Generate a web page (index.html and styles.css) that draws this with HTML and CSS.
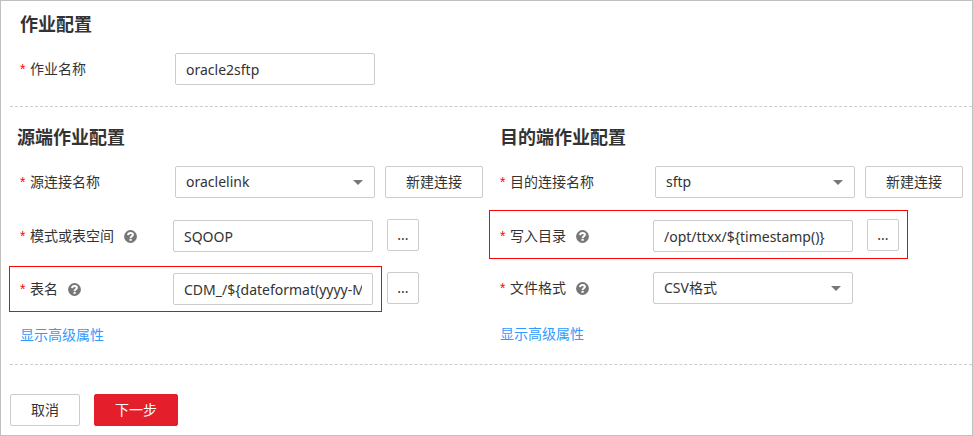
FILE: index.html
```html
<!DOCTYPE html>
<html lang="zh-CN">
<head>
<meta charset="utf-8">
<meta name="viewport" content="width=device-width, initial-scale=1">
<title>作业配置</title>
<link rel="stylesheet" href="styles.css">
</head>
<body>
<svg class="sprite" aria-hidden="true">
  <symbol id="help" viewBox="0 0 13 13">
    <circle cx="6.5" cy="6.5" r="6.4" fill="#777"/>
    <path d="M4 5.200C4.200 3.700 5.200 3 6.500 3c1.400 0 2.400.7 2.400 1.800C8.900 6.300 6.700 6.300 6.600 8" fill="none" stroke="#fff" stroke-width="2"/>
    <rect x="5.500" y="8.800" width="2.200" height="2" fill="#fff"/>
  </symbol>
</svg>
<form class="page">
  <section class="job">
    <h2 class="title">作业配置</h2>
    <div class="row">
      <label class="label" for="job-name"><span class="star">*</span>作业名称</label>
      <input class="control" id="job-name" type="text" value="oracle2sftp">
    </div>
  </section>
  <hr class="divider">
  <div class="columns">
    <section class="column">
      <h2 class="title title-source">源端作业配置</h2>
      <div class="rows">
        <div class="row">
          <label class="label" for="src-link"><span class="star">*</span>源连接名称</label>
          <span class="select"><select class="control" id="src-link"><option>oraclelink</option></select></span>
          <button class="button new" type="button">新建连接</button>
        </div>
        <div class="row row-help">
          <label class="label" for="schema"><span class="star">*</span>模式或表空间<svg class="help"><use href="#help"/></svg></label>
          <input class="control" id="schema" type="text" value="SQOOP">
          <button class="button more" type="button" aria-label="选择模式或表空间">...</button>
        </div>
        <div class="row row-help">
          <div class="row-help row marked">
            <label class="label" for="table"><span class="star">*</span>表名<svg class="help"><use href="#help"/></svg></label>
            <input class="control" id="table" type="text" value="CDM_/${dateformat(yyyy-MM-dd)}">
          </div>
          <button class="button more" type="button" aria-label="选择表">...</button>
        </div>
        <a class="link" href="#">显示高级属性</a>
      </div>
    </section>
    <section class="column">
      <h2 class="title">目的端作业配置</h2>
      <div class="rows">
        <div class="row">
          <label class="label" for="dst-link"><span class="star">*</span>目的连接名称</label>
          <span class="select"><select class="control" id="dst-link"><option>sftp</option></select></span>
          <button class="button new" type="button">新建连接</button>
        </div>
        <div class="row row-help marked">
          <label class="label" for="dir"><span class="star">*</span>写入目录<svg class="help"><use href="#help"/></svg></label>
          <input class="control" id="dir" type="text" value="/opt/ttxx/${timestamp()}">
          <button class="button more" type="button" aria-label="选择写入目录">...</button>
        </div>
        <div class="row row-help">
          <label class="label" for="format"><span class="star">*</span>文件格式<svg class="help"><use href="#help"/></svg></label>
          <span class="select"><select class="control" id="format"><option>CSV格式</option></select></span>
        </div>
        <a class="link" href="#">显示高级属性</a>
      </div>
    </section>
  </div>
  <hr class="divider">
  <div class="actions">
    <button class="button" type="button">取消</button>
    <button class="button primary" type="submit">下一步</button>
  </div>
</form>
</body>
</html>
```

FILE: styles.css
```css
* {
  box-sizing: border-box;
}

body {
  margin: 0;
  background: #fff;
  color: #333;
  font: 14px/20px "Noto Sans", "Noto Sans CJK SC", sans-serif;
}

.sprite {
  position: absolute;
  width: 0;
  height: 0;
}

.page {
  border: 1px solid #c0c0c0;
  padding: 11px 0 9px 9px;
}

.job {
  padding-bottom: 21px;
}

.title {
  margin: 0 0 17px;
  padding-left: 10px;
  font-size: 18px;
  line-height: 24px;
  font-weight: 700;
}

.title-source {
  padding-left: 7px;
}

.divider {
  margin: 0;
  border: 0;
  border-top: 1px dashed #ccc;
}

.columns {
  display: grid;
  grid-template-columns: 1fr 1fr;
  padding: 18px 2px 19px 0;
}

.rows {
  display: flex;
  flex-direction: column;
  align-items: flex-start;
  gap: 20px;
}

.rows > :first-child {
  min-height: 33px;
}

.row {
  display: flex;
  padding-left: 10px;
}

.row .row {
  padding-left: 0;
}

.row-help {
  align-items: flex-start;
}

.row-help input {
  margin-top: 1px;
}

.label {
  display: flex;
  align-items: center;
  width: 155px;
  height: 32px;
}

.row-help .label {
  width: 153px;
  align-self: flex-end;
}

.star {
  width: 10px;
  color: #f00;
  font-family: "Liberation Sans", sans-serif;
}

.help {
  width: 13px;
  height: 13px;
  margin-left: 10px;
}

.control {
  display: block;
  width: 200px;
  height: 32px;
  padding: 0 10px;
  border: 1px solid #ccc;
  border-radius: 2px;
  background: #fff;
  color: #333;
  font: inherit;
  appearance: none;
}

.select {
  position: relative;
}

.select::after {
  content: "";
  position: absolute;
  top: 14px;
  right: 12px;
  border: 5px solid transparent;
  border-top-color: #777;
  border-bottom: 0;
  pointer-events: none;
}

.button {
  height: 32px;
  padding: 0 20px;
  border: 1px solid #ccc;
  border-radius: 2px;
  background: #fff;
  color: #333;
  font: inherit;
}

.new {
  width: 98px;
  margin-left: 10px;
}

.more {
  width: 32px;
  margin-left: 14px;
  padding: 0;
}

.marked {
  position: relative;
}

.marked::after {
  content: "";
  position: absolute;
  inset: -9px -9px -7px -1px;
  border: 1px solid #f00;
  pointer-events: none;
}

.row .marked::after {
  inset: -6px -9px -7px -11px;
}

.link {
  margin-left: 10px;
  color: #39f;
  text-decoration: none;
}

.actions {
  display: flex;
  gap: 14px;
  padding-top: 29px;
}

.primary {
  border-color: #e41f2b;
  background: #e41f2b;
  color: #fff;
}
```
